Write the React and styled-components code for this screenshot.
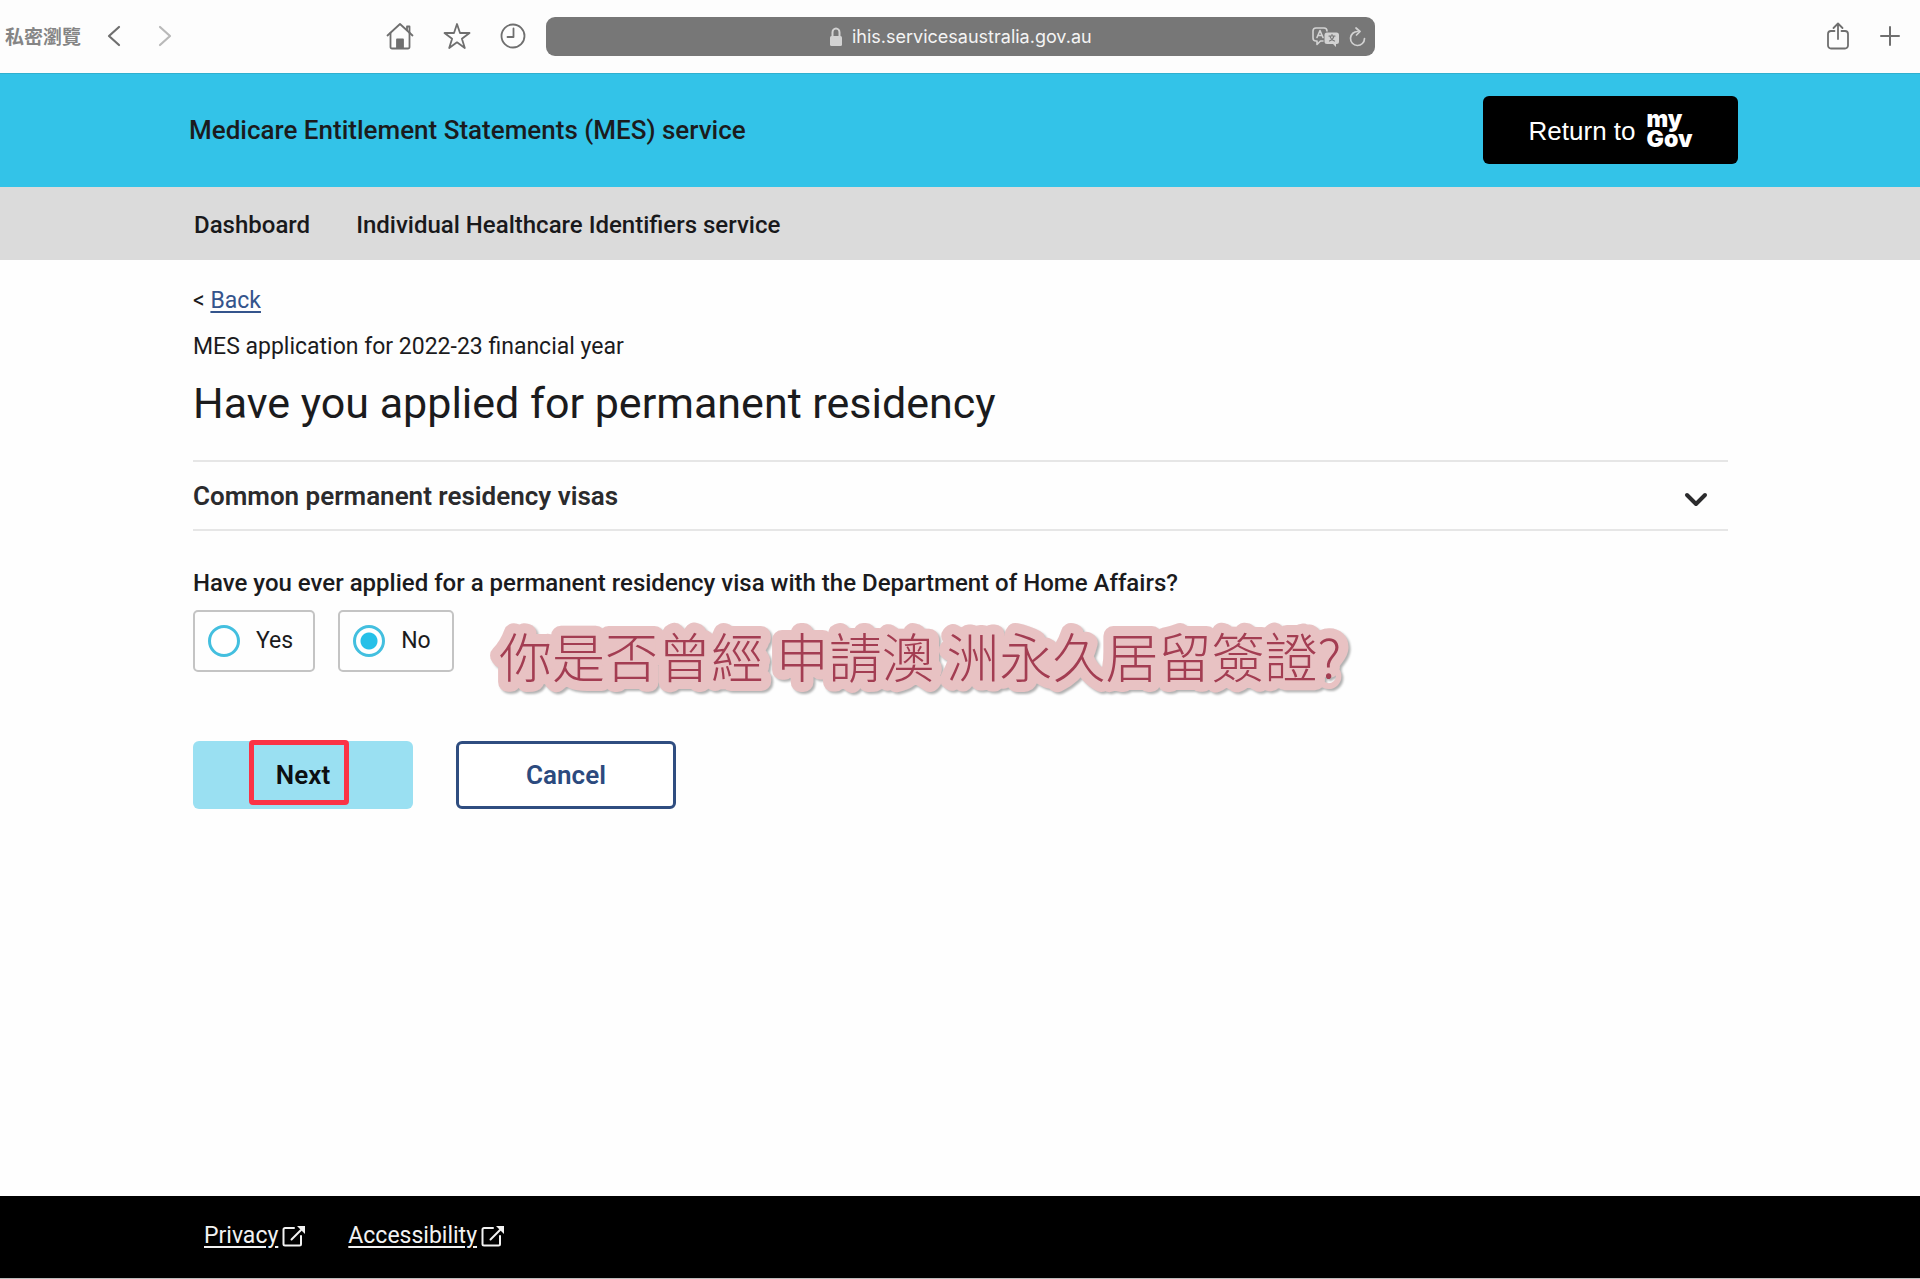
import React, { useState } from "react";
import styled, { createGlobalStyle } from "styled-components";

const GlobalStyle = createGlobalStyle`
  *, *::before, *::after { box-sizing: border-box; }
  body {
    margin: 0;
    background: #fefefe;
    color: #1b1b1d;
    font-family: Roboto, "Liberation Sans", "Noto Sans CJK TC", sans-serif;
  }
  button, input { font: inherit; color: inherit; }
`;

const Page = styled.div`
  min-height: 100vh;
  display: flex;
  flex-direction: column;
`;

/* Browser toolbar */

const Toolbar = styled.div`
  display: grid;
  grid-template-columns: 546fr 829fr 545fr;
  align-items: center;
  height: 73px;
  padding-bottom: 1px;
  background: #fdfdfd;
  color: #6f6f6f;
`;

const ToolGroup = styled.div`
  display: flex;
  align-items: center;
  gap: ${(p) => p.$gap}px;
`;

const ToolbarLeft = styled.div`
  display: flex;
  align-items: center;
  justify-content: space-between;
  padding: 0 20px 0 5px;
`;

const ToolbarRight = styled(ToolGroup)`
  justify-content: flex-end;
  padding-right: 20px;
`;

const PrivateLabel = styled.span`
  color: #858585;
  font-family: "Noto Sans CJK TC", sans-serif;
  font-size: 19px;
  font-weight: 700;
  line-height: 24px;
`;

const IconButton = styled.button`
  display: flex;
  padding: 0;
  border: 0;
  background: none;
  color: ${(p) => (p.$faint ? "#b9b9b9" : "inherit")};
  cursor: pointer;
`;

const AddressBar = styled.div`
  display: grid;
  grid-template-columns: 1fr auto 1fr;
  align-items: center;
  height: 39px;
  padding: 1px 9px 0;
  border-radius: 9px;
  background: #777777;
  color: #d2d2d2;
`;

const AddressField = styled.label`
  grid-column: 2;
  display: flex;
  align-items: center;
  gap: 9px;
`;

const AddressInput = styled.input`
  width: 240px;
  padding: 0;
  border: 0;
  outline: 0;
  background: none;
  color: #f4f4f4;
  font-family: Inter, sans-serif;
  font-size: 18px;
  line-height: 24px;
`;

const AddressActions = styled(ToolGroup)`
  justify-content: flex-end;
`;

/* Site header */

const Header = styled.header`
  display: flex;
  align-items: center;
  justify-content: space-between;
  height: 114px;
  padding: 0 182px 2px 189px;
  border-top: 1px solid #2fb0cf;
  background: #33c3e8;
`;

const ServiceName = styled.span`
  font-size: 26px;
  font-weight: 500;
  line-height: 32px;
`;

const MyGovButton = styled.button`
  display: flex;
  align-items: center;
  justify-content: center;
  gap: 11px;
  width: 255px;
  height: 68px;
  padding: 2px 0 0;
  border: 0;
  border-radius: 6px;
  background: #000;
  color: #fff;
  font-family: "Liberation Sans", sans-serif;
  font-size: 26px;
  line-height: 32px;
  cursor: pointer;
`;

const MyGovMark = styled.span`
  padding-bottom: 4px;
  font-family: Inter, sans-serif;
  font-size: 23px;
  font-weight: 900;
  line-height: 20px;
  text-align: left;
  white-space: pre-line;
`;

const Nav = styled.nav`
  display: flex;
  align-items: center;
  gap: 46px;
  height: 73px;
  padding: 2px 194px 0;
  background: #dbdbdb;
`;

const NavLink = styled.a`
  color: #19191b;
  font-size: 24px;
  font-weight: 500;
  line-height: 32px;
  text-decoration: none;
`;

/* Page content */

const Main = styled.main`
  flex: 1;
  padding: 25px 10% 48px;
  margin-left: 1px;
`;

const BodyLine = styled.p`
  margin: 0 0 14px;
  font-size: 23px;
  line-height: 32px;
`;

const BackLink = styled.a`
  color: #34548c;
  text-decoration: underline;
  text-underline-offset: 3px;
`;

const Title = styled.h1`
  margin: 0 0 31px;
  font-size: 43px;
  font-weight: 400;
  line-height: 52px;
`;

const Accordion = styled.button`
  display: flex;
  align-items: center;
  justify-content: space-between;
  width: 100%;
  height: 71px;
  padding: 0 20px 0 0;
  border: solid #e6e6e6;
  border-width: 2px 0;
  background: none;
  color: #2b2b2d;
  font-size: 26px;
  font-weight: 600;
  line-height: 32px;
  text-align: left;
  cursor: pointer;

  svg { margin-top: 8px; }
`;

const Question = styled.fieldset`
  position: relative;
  margin: 36px 0 0;
  padding: 0;
  border: 0;
`;

const Legend = styled.legend`
  padding: 0;
  margin-bottom: 11px;
  font-size: 24px;
  font-weight: 500;
  line-height: 32px;
`;

const Options = styled.div`
  display: flex;
  gap: 23px;
`;

const Option = styled.label`
  display: flex;
  align-items: center;
  gap: 16px;
  min-width: 116px;
  height: 62px;
  padding: 0 20px 0 13px;
  border: 2px solid #c4c4c4;
  border-radius: 5px;
  font-size: 23px;
  line-height: 32px;
  cursor: pointer;
`;

const Radio = styled.input`
  appearance: none;
  width: 32px;
  height: 32px;
  margin: 0;
  border: 3px solid #43bfdf;
  border-radius: 50%;
  background: #fff;

  &:checked {
    background: radial-gradient(circle, #26c0e8 8px, #fff 9px);
  }
`;

/* Handwritten sticker laid over the form */
const Sticker = styled.svg`
  position: absolute;
  left: 286px;
  bottom: -36px;
  overflow: visible;
  filter: drop-shadow(2px 2px 1px rgba(0, 0, 0, 0.3));
  pointer-events: none;

  text {
    fill: #a33d52;
    stroke: #e8c2c3;
    stroke-width: 20px;
    stroke-linejoin: round;
    stroke-linecap: round;
    paint-order: stroke fill;
    font-family: "Noto Sans CJK TC", sans-serif;
    font-size: 53px;
    font-weight: 300;
  }
`;

const Actions = styled.div`
  display: flex;
  gap: 43px;
  margin-top: 69px;
`;

const ActionButton = styled.button`
  position: relative;
  width: 220px;
  height: 68px;
  padding: 0;
  border: ${(p) => (p.$primary ? "0" : "3px solid #2f4d80")};
  border-radius: 6px;
  background: ${(p) => (p.$primary ? "#9ae0f2" : "#fff")};
  color: ${(p) => (p.$primary ? "#0c0f11" : "#2c4a7e")};
  font-size: 26px;
  font-weight: 600;
  line-height: 32px;
  cursor: pointer;
`;

/* Red frame drawn round the button's caption */
const Marker = styled.span`
  position: absolute;
  top: -1px;
  left: 56px;
  width: 100px;
  height: 65px;
  border: 5px solid #fb3346;
  border-radius: 4px;
`;

const Footer = styled.footer`
  display: flex;
  align-items: center;
  gap: 42px;
  height: 83px;
  padding: 0 204px 2px;
  border-bottom: 1px solid #bdbdbd;
  background: #000;
`;

const FooterLink = styled.a`
  display: flex;
  align-items: center;
  gap: 4px;
  color: #f2f2f2;
  font-size: 23px;
  line-height: 32px;
  text-underline-offset: 3px;
`;

function Icon({ w, h, width = 2, children }) {
  return (
    <svg
      width={w}
      height={h}
      viewBox={`0 0 ${w} ${h}`}
      fill="none"
      stroke="currentColor"
      strokeWidth={width}
      strokeLinecap="round"
      strokeLinejoin="round"
      aria-hidden="true"
    >
      {children}
    </svg>
  );
}

const ExternalIcon = () => (
  <Icon w={24} h={22} width={2}>
    <path d="M12 3H3a1.500 1.500 0 0 0-1.500 1.500V19A1.500 1.500 0 0 0 3 20.500h14.500A1.500 1.500 0 0 0 19 19v-8" />
    <path d="M9.500 14.500 19 5" />
    <path d="M15 1h8v8z" fill="currentColor" stroke="none" />
  </Icon>
);

function BrowserToolbar() {
  return (
    <Toolbar>
      <ToolbarLeft>
        <ToolGroup $gap={26}>
          <PrivateLabel>私密瀏覽</PrivateLabel>
          <ToolGroup $gap={37}>
            <IconButton aria-label="Back">
              <Icon w={14} h={22} width={2.2}><path d="M12 2 2 11l10 9" /></Icon>
            </IconButton>
            <IconButton aria-label="Forward" $faint>
              <Icon w={14} h={22} width={2.2}><path d="m2 2 10 9-10 9" /></Icon>
            </IconButton>
          </ToolGroup>
        </ToolGroup>
        <ToolGroup $gap={29}>
          <IconButton aria-label="Home">
            <Icon w={28} h={28} width={1.800}>
              <path d="M1.500 13.500 14 2l12.500 11.500" />
              <path d="M4.500 11v14a1.500 1.500 0 0 0 1.500 1.500h16a1.500 1.500 0 0 0 1.500-1.500V11" />
              <path d="M21 8V4.500h2.500v6" />
              <path d="M11 26v-8.500h6V26z" fill="currentColor" />
            </Icon>
          </IconButton>
          <IconButton aria-label="Bookmarks">
            <Icon w={28} h={28} width={1.800}>
              <path d="m14 2 3 9h9.500l-7.600 5.700 2.900 9.300-7.800-5.700L6.200 26l2.900-9.300L1.500 11H11z" />
            </Icon>
          </IconButton>
          <IconButton aria-label="History">
            <Icon w={26} h={26} width={1.800}>
              <circle cx="13" cy="13" r="11.500" />
              <path d="M13.500 5.500V14H7.500" />
            </Icon>
          </IconButton>
        </ToolGroup>
      </ToolbarLeft>
      <AddressBar>
        <AddressField>
          <Icon w={14} h={20} width={2}>
            <path d="M3.500 9V5.500a3.500 4 0 0 1 7 0V9" />
            <rect x="1" y="9" width="12" height="10" rx="1.500" fill="currentColor" stroke="none" />
          </Icon>
          <AddressInput aria-label="Address" defaultValue="ihis.servicesaustralia.gov.au" />
        </AddressField>
        <AddressActions $gap={8}>
          <IconButton aria-label="Translate">
            <Icon w={28} h={20} width={1.600}>
              <path d="M11 14H8.500L5 17.500V14H4a3 3 0 0 1-3-3V4a3 3 0 0 1 3-3h8a3 3 0 0 1 3 3" />
              <path d="m5 10.500 3-7 3 7M6 8.500h4" />
              <path d="M15 5.500h9.500A2.500 2.500 0 0 1 27 8v6.500a2.500 2.500 0 0 1-2.500 2.500H24v3l-3-3h-6a2.500 2.500 0 0 1-2.500-2.500V8A2.500 2.500 0 0 1 15 5.500z" fill="currentColor" stroke="none" />
              <path d="M17 9h6M20 7.500V9M22 9c-.5 2.500-2 4-4.500 5M18 9c.5 2.500 2 4 4.500 5" stroke="#777" strokeWidth="1.200" />
            </Icon>
          </IconButton>
          <IconButton aria-label="Reload">
            <Icon w={18} h={20} width={1.700}>
              <path d="M10 4.500a7 7 0 1 0 6.500 7" />
              <path d="m8 1 4 3.500L8.500 8" />
            </Icon>
          </IconButton>
        </AddressActions>
      </AddressBar>
      <ToolbarRight $gap={31}>
        <IconButton aria-label="Share">
          <Icon w={22} h={28} width={1.800}>
            <path d="M7.500 9H4a3 3 0 0 0-3 3v11.500a3 3 0 0 0 3 3h14a3 3 0 0 0 3-3V12a3 3 0 0 0-3-3h-3.500" />
            <path d="M11 17V2M6.500 6 11 1.500 15.500 6" />
          </Icon>
        </IconButton>
        <IconButton aria-label="New tab">
          <Icon w={20} h={20} width={2}><path d="M10 1v18M1 10h18" /></Icon>
        </IconButton>
      </ToolbarRight>
    </Toolbar>
  );
}

export default function App() {
  const [answer, setAnswer] = useState("No");
  return (
    <Page>
      <GlobalStyle />
      <BrowserToolbar />
      <Header>
        <ServiceName>Medicare Entitlement Statements (MES) service</ServiceName>
        <MyGovButton>
          Return to
          <MyGovMark>{"my\nGov"}</MyGovMark>
        </MyGovButton>
      </Header>
      <Nav>
        <NavLink href="#dashboard">Dashboard</NavLink>
        <NavLink href="#ihi">Individual Healthcare Identifiers service</NavLink>
      </Nav>
      <Main>
        <BodyLine>
          &lt; <BackLink href="#back">Back</BackLink>
        </BodyLine>
        <BodyLine>MES application for 2022-23 financial year</BodyLine>
        <Title>Have you applied for permanent residency</Title>
        <Accordion aria-expanded="false">
          Common permanent residency visas
          <Icon w={24} h={16} width={4}><path d="m3 3 9 9 9-9" /></Icon>
        </Accordion>
        <Question>
          <Legend>
            Have you ever applied for a permanent residency visa with the Department of Home Affairs?
          </Legend>
          <Options>
            {["Yes", "No"].map((value) => (
              <Option key={value}>
                <Radio
                  type="radio"
                  name="applied"
                  value={value}
                  checked={answer === value}
                  onChange={() => setAnswer(value)}
                />
                {value}
              </Option>
            ))}
          </Options>
          <Sticker width="880" height="96" lang="zh-Hant">
            <text x="20" y="66">你是否曾經 申請澳 洲永久居留簽證?</text>
          </Sticker>
        </Question>
        <Actions>
          <ActionButton $primary>
            Next
            <Marker />
          </ActionButton>
          <ActionButton>Cancel</ActionButton>
        </Actions>
      </Main>
      <Footer>
        <FooterLink href="#privacy">
          Privacy
          <ExternalIcon />
        </FooterLink>
        <FooterLink href="#accessibility">
          Accessibility
          <ExternalIcon />
        </FooterLink>
      </Footer>
    </Page>
  );
}
